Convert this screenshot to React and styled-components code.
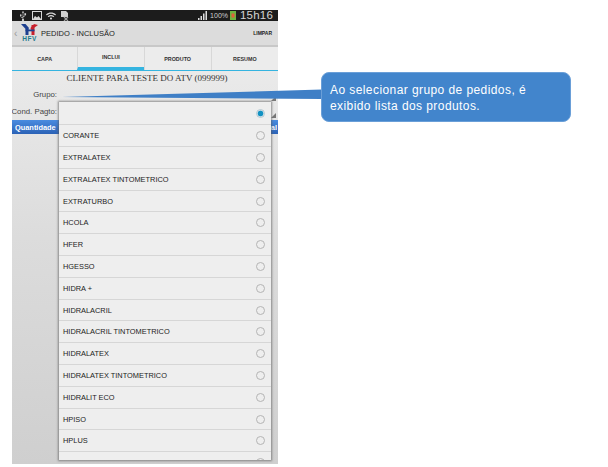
import React from 'react';
import styled, { createGlobalStyle } from 'styled-components';
import { FaUsb, FaWifi } from 'react-icons/fa';

const GlobalStyle = createGlobalStyle`
  html, body { margin: 0; padding: 0; background: #fff; }
  body { font-family: "Liberation Sans", Arial, sans-serif; }
`;

const Page = styled.div`
  position: relative;
  width: 608px;
  height: 467px;
  padding: 10px 0 0 12px;
  box-sizing: border-box;
  overflow: hidden;
`;

const Phone = styled.div`
  position: relative;
  width: 266px;
  height: 454px;
  display: flex;
  flex-direction: column;
  overflow: hidden;
  background: linear-gradient(180deg, #efefef 0%, #dcdcdc 50%, #cfcfcf 100%);
`;

const StatusBar = styled.div`
  height: 11px;
  background: #1c1c1c;
  display: flex;
  align-items: center;
  padding: 0 5px 0 6px;
  gap: 4px;
  color: #d8d8d8;
`;

const StatusRight = styled.div`
  margin-left: auto;
  display: flex;
  align-items: center;
  gap: 2px;
`;

const Percent = styled.span`
  font-size: 7px;
  color: #cfcfcf;
`;

const Clock = styled.span`
  font-size: 11.5px;
  line-height: 11px;
  letter-spacing: 0.2px;
  margin-left: 2px;
  color: #d4d4d4;
`;

const ActionBar = styled.div`
  height: 24px;
  background: #dcdcdc;
  border-bottom: 2px solid #c8c8c8;
  display: flex;
  align-items: center;
  color: #222;
`;

const Back = styled.span`
  font-size: 10px;
  color: #999;
  width: 7px;
  margin-left: 2px;
`;

const Logo = styled.div`
  width: 17px;
  margin-right: 3px;
  display: flex;
  flex-direction: column;
  align-items: center;
`;

const LogoLabel = styled.span`
  font-size: 6.5px;
  line-height: 7px;
  color: #1e7a8c;
  font-weight: 700;
  letter-spacing: 0.5px;
`;

const Title = styled.span`
  font-size: 7.5px;
`;

const Clear = styled.span`
  margin-left: auto;
  margin-right: 6px;
  font-size: 5px;
  font-weight: 700;
`;

const Tabs = styled.div`
  display: flex;
  height: 23px;
  background: #ececec;
  border-bottom: 1px solid #35b4e0;
`;

const Tab = styled.div`
  flex: ${p => p.$w} 0 0;
  display: flex;
  align-items: center;
  justify-content: center;
  font-size: 5.4px;
  font-weight: 700;
  color: #333;
  box-sizing: border-box;
  border-left: ${p => (p.$first ? 'none' : '1px solid #d8d8d8')};
  border-bottom: ${p => (p.$active ? '3px solid #35b4e0' : 'none')};
`;

const ClientName = styled.div`
  font-family: "Liberation Serif", "Times New Roman", serif;
  font-size: 9px;
  color: #333;
  text-align: center;
  margin: 1px 0 2px;
  height: 12px;
  line-height: 12px;
  padding-left: 4px;
`;

const FormRow = styled.div`
  display: flex;
  justify-content: flex-end;
  width: 45px;
  height: 17px;
  align-items: center;
  font-size: 7.8px;
  color: #444;
  white-space: nowrap;
`;

const TableHead = styled.div`
  height: 14px;
  background: linear-gradient(180deg, #4a8ce0, #2b62b6);
  color: #fff;
  font-size: 7.4px;
  font-weight: 700;
  display: flex;
  align-items: center;
  justify-content: space-between;
  padding: 0 1px 0 3px;
`;

const SelectCorner = styled.span`
  position: absolute;
  right: 2px;
  top: ${p => p.$top}px;
  width: 0;
  height: 0;
  border-left: 5px solid transparent;
  border-bottom: 5px solid #777;
`;

const Dropdown = styled.div`
  position: absolute;
  left: 47px;
  top: 92px;
  width: 212px;
  height: 358px;
  padding-top: 1.5px;
  box-sizing: border-box;
  background: #eeeeee;
  box-shadow: 0 0 2px 1px rgba(90, 90, 90, 0.65);
  overflow: hidden;
`;

const Option = styled.div`
  height: 21.8px;
  box-sizing: border-box;
  display: flex;
  align-items: center;
  justify-content: space-between;
  padding: 0 6px 0 4px;
  border-bottom: 1px solid #d6d6d6;
  font-size: 7.4px;
  color: #222;
`;

const Radio = styled.span`
  width: 7px;
  height: 7px;
  border-radius: 50%;
  border: 1px solid ${p => (p.$on ? '#b5c9d2' : '#b4b4b4')};
  background: ${p => (p.$on ? 'radial-gradient(circle, #1291c2 0 50%, #d8e6ec 65%)' : 'transparent')};
`;

const Connector = styled.svg`
  position: absolute;
  left: 0;
  top: 0;
  pointer-events: none;
`;

const Callout = styled.div`
  position: absolute;
  left: 321px;
  top: 72px;
  width: 250px;
  height: 50px;
  box-sizing: border-box;
  padding: 9px 8px;
  background: #4285cc;
  border: 1px solid #6a9fd8;
  border-radius: 8px;
  color: #fff;
  font-size: 12px;
  line-height: 16px;
  letter-spacing: 0.42px;
`;

const options = [
  '',
  'CORANTE',
  'EXTRALATEX',
  'EXTRALATEX TINTOMETRICO',
  'EXTRATURBO',
  'HCOLA',
  'HFER',
  'HGESSO',
  'HIDRA +',
  'HIDRALACRIL',
  'HIDRALACRIL TINTOMETRICO',
  'HIDRALATEX',
  'HIDRALATEX TINTOMETRICO',
  'HIDRALIT ECO',
  'HPISO',
  'HPLUS',
  'LATEX ROMPLEMENTOS',
];

const tabs = [
  { label: 'CAPA', w: 66 },
  { label: 'INCLUI', w: 66, active: true },
  { label: 'PRODUTO', w: 67 },
  { label: 'RESUMO', w: 67 },
];

function StatusIcons() {
  return (
    <>
      <FaUsb size={10} style={{ transform: 'rotate(-90deg)' }} />
      <svg width="10" height="9" viewBox="0 0 10 9">
        <rect x="0.5" y="0.5" width="9" height="8" fill="none" stroke="#d8d8d8" />
        <path d="M1 8 L3 5 L5 6.5 L6.5 5 L9 8 Z" fill="#d8d8d8" />
      </svg>
      <FaWifi size={10} />
      <svg width="9" height="10" viewBox="0 0 9 10">
        <path d="M1 0 H6 L8 2 V6 H1 Z" fill="#d0d0d0" />
        <path d="M4 6 L8 10 M8 6 L4 10" stroke="#a0a0a0" strokeWidth="1.2" />
      </svg>
    </>
  );
}

function Signal() {
  return (
    <svg width="10" height="9" viewBox="0 0 10 9">
      <rect x="0" y="7" width="1.5" height="2" fill="#ddd" />
      <rect x="2.5" y="5" width="1.5" height="4" fill="#ddd" />
      <rect x="5" y="2.5" width="1.5" height="6.5" fill="#ddd" />
      <rect x="7.5" y="0" width="1.5" height="9" fill="#ddd" />
    </svg>
  );
}

function Battery() {
  return (
    <svg width="6" height="9" viewBox="0 0 6 9">
      <rect x="0" y="0" width="6" height="9" fill="#6db33f" />
      <rect x="1.5" y="2.5" width="3" height="4" fill="#e2603a" />
    </svg>
  );
}

function HfvMark() {
  return (
    <svg width="17" height="11" viewBox="0 0 17 11">
      <path d="M0 0 L4.5 0 L8 4 L7 6 L5.5 6 Z" fill="#1d3f8f" />
      <path d="M17 1 L13 0 L9.5 4 L10 6 Z" fill="#c8202c" />
      <rect x="4.5" y="5" width="3" height="6" fill="#1d3f8f" />
      <rect x="10.5" y="1" width="3" height="10" fill="#c8202c" />
      <rect x="4.5" y="5.5" width="9" height="1.8" fill="#1d3f8f" />
    </svg>
  );
}

export default function App() {
  return (
    <Page>
      <GlobalStyle />
      <Phone>
        <StatusBar>
          <StatusIcons />
          <StatusRight>
            <Signal />
            <Percent>100%</Percent>
            <Battery />
            <Clock>15h16</Clock>
          </StatusRight>
        </StatusBar>
        <ActionBar>
          <Back>‹</Back>
          <Logo>
            <HfvMark />
            <LogoLabel>HFV</LogoLabel>
          </Logo>
          <Title>PEDIDO - INCLUSÃO</Title>
          <Clear>LIMPAR</Clear>
        </ActionBar>
        <Tabs>
          {tabs.map((t, i) => (
            <Tab key={t.label} $w={t.w} $active={t.active} $first={i === 0}>{t.label}</Tab>
          ))}
        </Tabs>
        <ClientName>CLIENTE PARA TESTE DO ATV (099999)</ClientName>
        <FormRow>Grupo:</FormRow>
        <FormRow>Cond. Pagto:</FormRow>
        <TableHead>
          <span>Quantidade</span>
          <span>Total</span>
        </TableHead>
        <SelectCorner $top={86} />
        <SelectCorner $top={103} />
        <Dropdown>
          {options.map((o, i) => (
            <Option key={o || 'empty'}>
              <span>{o}</span>
              <Radio $on={i === 0} />
            </Option>
          ))}
        </Dropdown>
      </Phone>
      <Connector width="608" height="467">
        <polygon points="62,97 322,89.5 322,99" fill="#3f7fc6" />
      </Connector>
      <Callout>Ao selecionar grupo de pedidos, é exibido lista dos produtos.</Callout>
    </Page>
  );
}
